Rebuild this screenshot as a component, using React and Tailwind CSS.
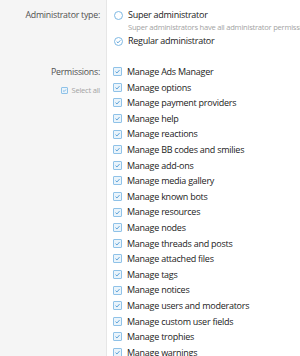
import React from 'react';

const permissions = [
  'Manage Ads Manager',
  'Manage options',
  'Manage payment providers',
  'Manage help',
  'Manage reactions',
  'Manage BB codes and smilies',
  'Manage add-ons',
  'Manage media gallery',
  'Manage known bots',
  'Manage resources',
  'Manage nodes',
  'Manage threads and posts',
  'Manage attached files',
  'Manage tags',
  'Manage notices',
  'Manage users and moderators',
  'Manage custom user fields',
  'Manage trophies',
  'Manage warnings',
];

const CheckBox = ({ small }) => (
  <span
    className={`inline-flex shrink-0 items-center justify-center border border-[#8fc2e8] bg-[#eaf4fb] rounded-[1px] ${
      small ? 'w-[7px] h-[7px]' : 'w-[9px] h-[9px]'
    }`}
  >
    <svg viewBox="0 0 10 10" className="w-full h-full">
      <path d="M2.2 5.2 L4.2 7.1 L7.9 3" fill="none" stroke="#3d8fd1" strokeWidth="1.2" />
    </svg>
  </span>
);

const App = () => {
  return (
    <div className="w-[300px] h-[356px] overflow-hidden bg-white text-[#222222] tracking-[-0.25px]" style={{ fontFamily: '"Open Sans", "Noto Sans", sans-serif' }}>
      {/* Administrator type */}
      <div className="flex">
        <div className="w-[107px] shrink-0 bg-[#f5f5f5] border-r border-[#e6e6e6] pt-[8px] pb-[16px] pr-[6px] text-right text-[8.8px] leading-[14px] text-[#505050] whitespace-nowrap">
          Administrator type:
        </div>
        <div className="flex-1 min-w-0 pt-[8px] pl-[7px] pb-[12px]">
          <div className="flex items-center gap-[5px] whitespace-nowrap text-[9px] leading-[14px]">
            <span className="w-[9px] h-[9px] rounded-full border border-[#7fb9e4] bg-white shrink-0" />
            <span>Super administrator</span>
          </div>
          <div className="pl-[14px] text-[7.6px] leading-[11px] text-[#a3a3a3] whitespace-nowrap">
            Super administrators have all administrator permissions
          </div>
          <div className="flex items-center gap-[5px] whitespace-nowrap text-[9px] leading-[14px] mt-[1px]">
            <span className="w-[9px] h-[9px] rounded-full border border-[#7fb9e4] bg-white shrink-0 flex items-center justify-center">
              <svg viewBox="0 0 10 10" className="w-[7px] h-[7px]">
                <path d="M2.4 5.1 L4.3 6.9 L7.6 3.4" fill="none" stroke="#3d8fd1" strokeWidth="1.2" />
              </svg>
            </span>
            <span>Regular administrator</span>
          </div>
        </div>
      </div>

      {/* Permissions */}
      <div className="flex">
        <div className="w-[107px] shrink-0 bg-[#f5f5f5] border-r border-[#e6e6e6] pt-[5px] pr-[6px] text-right">
          <div className="text-[8.8px] leading-[14px] text-[#505050]">Permissions:</div>
          <div className="mt-[6px] flex items-center justify-end gap-[4px] text-[7.6px] leading-[11px] text-[#a3a3a3]">
            <CheckBox small />
            <span>Select all</span>
          </div>
        </div>
        <div className="flex-1 min-w-0 pt-[4px] pl-[6px]">
          {permissions.map((p) => (
            <div key={p} className="flex items-center gap-[5px] whitespace-nowrap text-[9px] leading-[15.6px]">
              <CheckBox />
              <span>{p}</span>
            </div>
          ))}
        </div>
      </div>
    </div>
  );
};

export default App;
